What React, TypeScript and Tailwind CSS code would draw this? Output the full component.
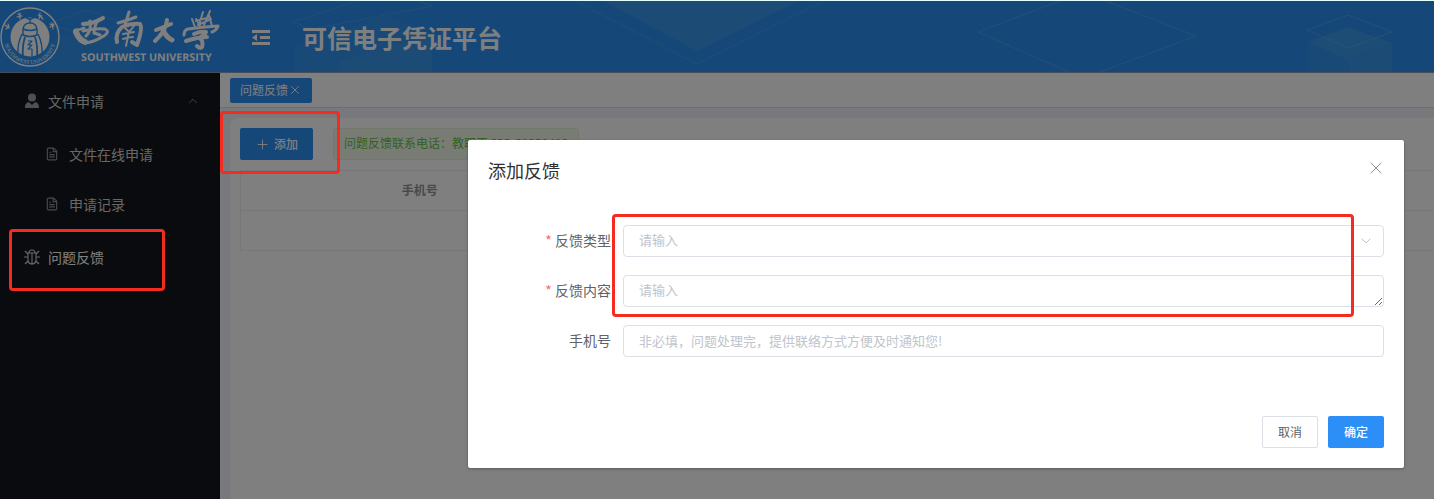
import { ChevronDown, ChevronUp, FileText, Plus, X } from 'lucide-react';

function Seal() {
  return (
    <svg viewBox="0 0 60 60" className="size-[60px] shrink-0" fill="none" stroke="#fff">
      <defs>
        <path id="ring-text" d="M4 31 A26 26 0 0 0 56 31" />
      </defs>
      <circle cx="30" cy="30" r="29" strokeWidth="1.4" />
      <circle cx="30" cy="30" r="19.5" fill="#fff" stroke="none" />
      <g stroke="#2b8ff2" strokeWidth="1.4" strokeLinejoin="round">
        <path d="M25 10l4 2h2l4-2M30 12v4" />
        <path d="M23 28v-6q1-6 7-6t7 6v6q-7 3-14 0z" fill="#fff" />
        <path d="M23 22q7 3 14 0" />
        <path d="M22 27q-5 10-4 22M38 27q5 10 4 22" />
        <path d="M25 30q-3 9-2 20M35 30q3 9 2 20" strokeWidth="1.800" />
        <path d="M28 34h4l-4 4h4l-4 4h4v7" strokeWidth="1.200" />
      </g>
      <g strokeWidth="1.2" strokeLinecap="round">
        <path d="M5 18l4 3M6 22l3-2M8 17l1 3M18 7l3 2M17 10l5-1M20 6l0 6M38 8l4 1M40 6l-1 6M40 9l3 3M50 17l4 2M50 20l4-3M52 16l1 6" />
      </g>
      <text fill="#fff" stroke="none" fontSize="5.600" fontFamily="Liberation Serif, serif">
        <textPath href="#ring-text" startOffset="6">SOUTHWEST UNIVERSITY</textPath>
      </text>
    </svg>
  );
}

function Wordmark() {
  return (
    <svg viewBox="0 0 148 62" className="h-[62px] w-[148px] shrink-0" role="img" aria-label="西南大學">
      <g fill="none" stroke="#fff" strokeLinecap="round" strokeLinejoin="round">
        <path d="M11 18q10 0 20-6" strokeWidth="4" />
        <path d="M4 26q3 8 9 10" strokeWidth="6" />
        <path d="M3 24q5 0 9-2" strokeWidth="3" />
        <path d="M11 25q12-3 22-2q6 3-3 8q-8 5-17 6" strokeWidth="3" />
        <path d="M18 15q2 9-4 15M26 14q-4 7-4 13l6 2" strokeWidth="3" />
        <path d="M46 17q8-2 18-6M57 6l-4 13" strokeWidth="3" />
        <path d="M45 36q-2-9 5-15q9-4 18-3q3 4-3 21l-5-3" strokeWidth="4" />
        <path d="M53 22l3 3M62 20l-4 5M51 28q6-1 11-2M51 33q6-2 10-2M57 25l-3 15" strokeWidth="2" />
        <path d="M84 24q8-3 15-6M95 14q-1 11-12 21" strokeWidth="4" />
        <path d="M91 24q3 7 9 10" strokeWidth="5" />
        <path d="M120 13l3 8M124 13l4 7M131 6l-4 13M138 5l-6 14M124 15l14-4M126 19l13-6M137 9l3 11" strokeWidth="2" />
        <path d="M112 29q0-5 4-6q14-2 30-3q-1 4-6 6" strokeWidth="3" />
        <path d="M122 28q7-3 12-2q-2 4-7 6q5 2 3 9q-2 2-5-1M114 35q12-4 21-4" strokeWidth="4" />
      </g>
      <text x="9" y="55" fill="#fff" fontSize="10.700" fontWeight="700" textRendering="geometricPrecision" fontFamily="'Open Sans', sans-serif">
        SOUTHWEST UNIVERSITY
      </text>
    </svg>
  );
}

function HeaderArt() {
  return (
    <svg viewBox="0 0 1434 71" className="absolute inset-0 h-full w-full" preserveAspectRatio="xMinYMin slice" fill="none" aria-hidden="true">
      <g stroke="#7fb4e0" strokeOpacity=".42">
        <path d="M50 22l37-13 37 13-37 14zM293 21l64-21M293 21l20 7 119-23-14-5M576 0l121 63L824 0" strokeOpacity=".3" />
        <path d="M1060 0l-82 31 91 40M1106 0l90 35-96 36M1307 29l41-15 44 17-44 16z" />
      </g>
      <path d="M604 0h194L697 50z" fill="#6cb4d8" fillOpacity=".22" />
      <path d="M295 43l90-28 47 18v38H295z" fill="#6cb4d8" fillOpacity=".11" />
      <path d="M340 60l92-26v37h-92z" fill="#6cb4d8" fillOpacity=".12" />
      <path d="M47 42l40-16 45 16v29H47z" fill="#6cb4d8" fillOpacity=".1" />
      <path d="M1308 41l40-15 44 16-44 17z" fill="#6cb4d8" fillOpacity=".26" />
      <path d="M1308 41l41 18v12h-41z" fill="#6cb4d8" fillOpacity=".1" />
      <path d="M1349 59l43-17v29h-43z" fill="#6cb4d8" fillOpacity=".2" />
    </svg>
  );
}

function Header() {
  return (
    <header className="relative flex h-[73px] items-center border-t border-b border-t-[#e4ffff] border-b-[#8f9db3] bg-[#2b8ff2] text-white">
      <HeaderArt />
      <div className="relative flex items-center">
        <Seal />
        <div className="ml-3">
          <Wordmark />
        </div>
        <button type="button" aria-label="收起菜单" className="ml-8">
          <svg viewBox="0 0 18 16" className="h-4 w-[18px]" fill="#fff">
            <path d="M0 1h18v3H0zM8 7h10v3H8zM0 13h18v3H0zM0 8.500L5 5v7z" />
          </svg>
        </button>
        <h1 className="ml-8 text-[25px] leading-8 font-bold">可信电子凭证平台</h1>
      </div>
    </header>
  );
}

function Sidebar() {
  return (
    <aside className="w-[220px] shrink-0 bg-[#14171c] text-sm text-[#cfcfcf]">
      <nav>
        <a href="#files" className="flex h-14 items-center pr-5 pl-6">
          <svg viewBox="0 0 16 16" className="mr-2 size-4" fill="#a0a0a4">
            <circle cx="8" cy="4.500" r="4" />
            <path d="M1 15c0-4 1-5 4-6l3 3 3-3c3 1 4 2 4 6z" />
          </svg>
          <span className="grow">文件申请</span>
          <ChevronUp size={14} strokeWidth={1.5} className="text-[#909399]" />
        </a>
        <a href="#apply" className="flex h-[50px] items-center pl-[45px]">
          <FileText size={14} strokeWidth={2} className="mr-[10px] text-[#909399]" />
          文件在线申请
        </a>
        <a href="#records" className="flex h-[50px] items-center pl-[45px]">
          <FileText size={14} strokeWidth={2} className="mr-[10px] text-[#909399]" />
          申请记录
        </a>
        <a href="#feedback" className="flex h-14 items-center pl-6 text-white">
          <svg viewBox="0 0 16 16" className="mr-2 size-4" fill="none" stroke="#d0d0d0" strokeWidth="1.100">
            <path d="M4 4h8v8q-1 3-4 3t-4-3zM5 4q0-3 3-3t3 3M8 4v11M0 8h4M12 8h4M1 2l3 3M15 2l-3 3M1 15l3-3M15 15l-3-3" />
          </svg>
          问题反馈
        </a>
      </nav>
    </aside>
  );
}

function FeedbackPage() {
  return (
    <main className="min-w-0 grow bg-[#f0f2f8] text-xs">
      <div className="flex h-[35px] items-center border-b border-[#d8dce5] bg-white px-[10px]">
        <button type="button" className="flex h-[25px] items-center rounded-xs bg-[#2b8ff2] px-[10px] text-white">
          问题反馈
          <X size={14} strokeWidth={1.5} />
        </button>
      </div>
      <section className="mt-[10px] ml-[10px] min-h-[381px] rounded-tl-lg bg-white pt-[10px] pl-[10px]">
        <div className="flex gap-5">
          <button type="button" className="flex h-8 items-center gap-1 rounded-xs bg-[#2b8ff2] px-[15px] font-medium text-white">
            <Plus size={15} strokeWidth={1.5} />
            添加
          </button>
          <p className="flex h-8 items-center rounded-sm border border-[#e1f3d8] bg-[#f0f9eb] px-[10px] pb-0.5 text-[#67c23a]">
            问题反馈联系电话：教职工 023-68250480
          </p>
        </div>
        <table className="mt-[10px] w-full table-fixed border-collapse border-y border-l border-[#ebeef5]">
          <thead>
            <tr className="h-10 border-b border-[#ebeef5] text-[#909399]">
              <th className="w-[30%] pb-0.5 font-bold">手机号</th>
              <th className="pb-0.5 font-bold">反馈内容</th>
            </tr>
          </thead>
          <tbody>
            <tr className="h-10"><td colSpan={2} /></tr>
          </tbody>
        </table>
      </section>
    </main>
  );
}

function FeedbackDialog() {
  const field = 'block h-8 w-full rounded-sm border border-[#dcdfe6] bg-white px-[15px] text-[13px] leading-4 placeholder:text-[#c0c4cc]';

  return (
    <form role="dialog" aria-labelledby="dialog-title" className="absolute top-[140px] right-[30px] left-[468px] rounded-xs bg-white px-5 pb-5 shadow-[0_1px_3px_rgba(0,0,0,0.3)]">
      <div className="flex items-start justify-between pt-[18px]">
        <h2 id="dialog-title" className="text-lg leading-6 text-[#303133]">添加反馈</h2>
        <button type="button" aria-label="关闭" className="-mr-0.5 text-[#909399]">
          <X size={20} strokeWidth={1.2} />
        </button>
      </div>
      <div className="mt-[43px] grid grid-cols-[123px_1fr] items-center gap-x-3 gap-y-[18px] text-sm text-[#606266]">
        <label htmlFor="type" className="pb-0.5 text-right"><span className="text-[#f56c6c]">* </span>反馈类型</label>
        <div className="relative">
          <select id="type" defaultValue="" className="block h-8 w-full appearance-none rounded-sm border border-[#dcdfe6] bg-white px-[15px] pb-0.5 text-[13px] text-[#c0c4cc]">
            <option value="">请输入</option>
          </select>
          <ChevronDown size={16} strokeWidth={1.5} className="pointer-events-none absolute top-2 right-[10px] text-[#c0c4cc]" />
        </div>
        <label htmlFor="content" className="pb-0.5 text-right"><span className="text-[#f56c6c]">* </span>反馈内容</label>
        <textarea id="content" placeholder="请输入" className={`${field} resize py-1.5`} />
        <label htmlFor="phone" className="pb-0.5 text-right">手机号</label>
        <input id="phone" placeholder="非必填，问题处理完，提供联络方式方便及时通知您!" className={`${field} pb-0.5`} />
      </div>
      <div className="mt-[59px] flex justify-end gap-[10px] text-xs">
        <button type="button" className="h-8 w-14 rounded-xs border border-[#dcdfe6] text-[#606266]">取消</button>
        <button type="submit" className="h-8 w-14 rounded-xs bg-[#2b8ff7] font-medium text-white">确定</button>
      </div>
    </form>
  );
}

export default function App() {
  return (
    <div className="relative min-h-screen overflow-hidden font-['Noto_Sans_CJK_SC',sans-serif]">
      <Header />
      <div className="flex min-h-[426px]">
        <Sidebar />
        <FeedbackPage />
      </div>
      <div className="absolute inset-0 top-px bg-black/50" />
      <FeedbackDialog />
      <div className="pointer-events-none absolute top-[111px] left-[220px] h-[63px] w-[120px] rounded-sm border-3 border-[#f52b20]" />
      <div className="pointer-events-none absolute top-[229px] left-[9px] h-[62px] w-[156px] rounded-sm border-3 border-[#f52b20]" />
      <div className="pointer-events-none absolute top-[214px] right-[80px] left-[612px] h-[103px] rounded-sm border-3 border-[#f52b20]" />
    </div>
  );
}
